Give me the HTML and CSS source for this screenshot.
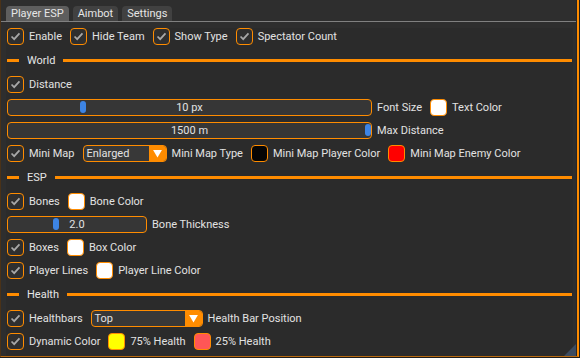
FILE: index.html
```html
<!DOCTYPE html>
<html lang="en">
<head>
  <meta charset="UTF-8" />
  <title>Player ESP</title>
  <link rel="stylesheet" href="styles.css">
</head>
<body>
  <div class="window">
    <!-- tab bar -->
    <div class="tabs">
      <div class="tab active">Player ESP</div>
      <div class="tab">Aimbot</div>
      <div class="tab">Settings</div>
    </div>

    <div class="content">
      <div class="row">
        <div class="item"><span class="cb"><svg viewBox="0 0 17 17"><polyline points="4,8.5 7,11.5 13,5"/></svg></span>Enable</div>
        <div class="item"><span class="cb"><svg viewBox="0 0 17 17"><polyline points="4,8.5 7,11.5 13,5"/></svg></span>Hide Team</div>
        <div class="item"><span class="cb"><svg viewBox="0 0 17 17"><polyline points="4,8.5 7,11.5 13,5"/></svg></span>Show Type</div>
        <div class="item"><span class="cb"><svg viewBox="0 0 17 17"><polyline points="4,8.5 7,11.5 13,5"/></svg></span>Spectator Count</div>
      </div>

      <div class="sep"><span class="sep-lead"></span><span class="sep-text">World</span><span class="sep-line"></span></div>

      <div class="row">
        <div class="item"><span class="cb"><svg viewBox="0 0 17 17"><polyline points="4,8.5 7,11.5 13,5"/></svg></span>Distance</div>
      </div>
      <div class="row">
        <div class="item"><div class="slider wide"><span class="grab" style="left: 72px"></span>10 px</div>Font Size</div>
        <div class="item"><span class="swatch white"></span>Text Color</div>
      </div>
      <div class="row">
        <div class="item"><div class="slider wide"><span class="grab" style="left: 357px"></span>1500 m</div>Max Distance</div>
      </div>
      <div class="row">
        <div class="item"><span class="cb"><svg viewBox="0 0 17 17"><polyline points="4,8.5 7,11.5 13,5"/></svg></span>Mini Map</div>
        <div class="item"><div class="combo small"><span class="combo-text">Enlarged</span><span class="combo-arrow"><svg viewBox="0 0 17 17"><polygon points="3.5,4.5 13.5,4.5 8.5,13"/></svg></span></div>Mini Map Type</div>
        <div class="item"><span class="swatch black"></span>Mini Map Player Color</div>
        <div class="item"><span class="swatch red"></span>Mini Map Enemy Color</div>
      </div>

      <div class="sep"><span class="sep-lead"></span><span class="sep-text">ESP</span><span class="sep-line"></span></div>

      <div class="row">
        <div class="item"><span class="cb"><svg viewBox="0 0 17 17"><polyline points="4,8.5 7,11.5 13,5"/></svg></span>Bones</div>
        <div class="item"><span class="swatch white"></span>Bone Color</div>
      </div>
      <div class="row">
        <div class="item"><div class="slider short"><span class="grab" style="left: 45px"></span>2.0</div>Bone Thickness</div>
      </div>
      <div class="row">
        <div class="item"><span class="cb"><svg viewBox="0 0 17 17"><polyline points="4,8.5 7,11.5 13,5"/></svg></span>Boxes</div>
        <div class="item"><span class="swatch white"></span>Box Color</div>
      </div>
      <div class="row">
        <div class="item"><span class="cb"><svg viewBox="0 0 17 17"><polyline points="4,8.5 7,11.5 13,5"/></svg></span>Player Lines</div>
        <div class="item"><span class="swatch white"></span>Player Line Color</div>
      </div>

      <div class="sep"><span class="sep-lead"></span><span class="sep-text">Health</span><span class="sep-line"></span></div>

      <div class="row">
        <div class="item"><span class="cb"><svg viewBox="0 0 17 17"><polyline points="4,8.5 7,11.5 13,5"/></svg></span>Healthbars</div>
        <div class="item"><div class="combo large"><span class="combo-text">Top</span><span class="combo-arrow"><svg viewBox="0 0 17 17"><polygon points="3.5,4.5 13.5,4.5 8.5,13"/></svg></span></div>Health Bar Position</div>
      </div>
      <div class="row">
        <div class="item"><span class="cb"><svg viewBox="0 0 17 17"><polyline points="4,8.5 7,11.5 13,5"/></svg></span>Dynamic Color</div>
        <div class="item"><span class="swatch yellow"></span>75% Health</div>
        <div class="item"><span class="swatch salmon"></span>25% Health</div>
      </div>
    </div>

    <span class="grip"></span>
  </div>
</body>
</html>
```

FILE: styles.css
```css
body {
  margin: 0;
  padding: 0;
  background: #1e1e1e;
  font-family: Roboto, "Liberation Sans", sans-serif;
  font-size: 11px;
  color: #e2e2e2;
}
.window {
  position: relative;
  width: 576px;
  height: 356px;
  background: #2e2e2e;
  border-left: 1px solid #4a3218;
  border-right: 2px solid #ff8c00;
  border-bottom: 1px solid #b86a10;
  box-shadow: inset -1px 0 #262626;
  overflow: hidden;
}
.tabs {
  display: flex;
  gap: 4px;
  padding: 6px 0 0 5px;
  width: 570px;
  border-bottom: 1px solid #808080;
}
.tab {
  height: 15px;
  line-height: 15px;
  padding: 0 5px;
  background: #414141;
  border-radius: 4px 4px 0 0;
  color: #e6e6e6;
}
.tab.active {
  background: #5e5e5e;
}
.content {
  margin: 6px 0 0 5px;
  padding-left: 1px;
  width: 566px;
  height: 329px;
  background: #2b2b2b;
  display: flex;
  flex-direction: column;
  gap: 6px;
}
.row {
  display: flex;
  align-items: center;
  height: 17px;
  gap: 8px;
}
.item {
  display: flex;
  align-items: center;
  gap: 5px;
  white-space: nowrap;
}
.cb {
  width: 15px;
  height: 15px;
  border: 1px solid #ff8c00;
  border-radius: 4px;
  background: #2f2f2f;
  display: flex;
}
.cb svg {
  width: 15px;
  height: 15px;
}
.cb polyline {
  fill: none;
  stroke: #a8a8a8;
  stroke-width: 2;
}
.swatch {
  width: 15px;
  height: 15px;
  border: 1px solid #ff8c00;
  border-radius: 4px;
}
.white { background: #ffffff; }
.black { background: #050505; }
.red { background: #ff0000; }
.yellow { background: #ffff00; }
.salmon { background: #ff5656; }
.slider {
  position: relative;
  height: 15px;
  line-height: 15px;
  border: 1px solid #ff8c00;
  border-radius: 4px;
  background: #363636;
  text-align: center;
}
.slider.wide { width: 363px; }
.slider.short { width: 138px; }
.grab {
  position: absolute;
  top: 1px;
  width: 6px;
  height: 12px;
  border-radius: 3px;
  background: #3d84e4;
}
.combo {
  display: flex;
  height: 15px;
  line-height: 15px;
  border: 1px solid #ff8c00;
  border-radius: 4px;
  background: #383838;
  overflow: hidden;
}
.combo.small { width: 82px; }
.combo.large { width: 110px; }
.combo-text {
  flex: 1;
  padding-left: 3px;
}
.combo-arrow {
  width: 17px;
  background: #ff8c00;
  display: flex;
}
.combo-arrow svg {
  width: 17px;
  height: 15px;
}
.combo-arrow polygon {
  fill: #ffffff;
}
.sep {
  display: flex;
  align-items: center;
  height: 19px;
  width: 565px;
  gap: 8px;
}
.sep-lead {
  width: 12px;
  height: 3px;
  background: #ff8c00;
}
.sep-line {
  flex: 1;
  height: 3px;
  background: #ff8c00;
}
.sep-text {
  color: #e6e6e6;
}
.grip {
  position: absolute;
  right: 1px;
  bottom: 0;
  width: 0;
  height: 0;
  border-left: 12px solid transparent;
  border-bottom: 12px solid #3b4b60;
}
```
